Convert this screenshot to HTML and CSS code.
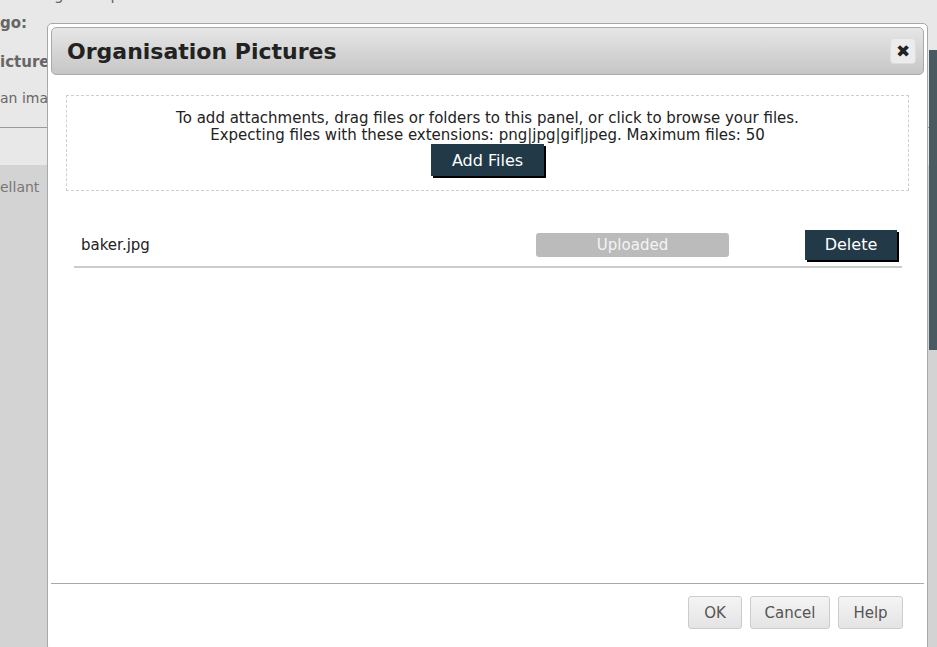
FILE: index.html
```html
<!DOCTYPE html>
<html lang="en">
<head>
    <meta charset="UTF-8">
    <meta name="viewport" content="width=device-width, initial-scale=1.0">
    <title>Organisation Pictures</title>
    <link rel="stylesheet" href="styles.css">
</head>
<body>
    <!-- Page behind the dialog -->
    <div id="page">
        <div class="page-top">
            <div class="cut-line">Organisation logo and pictures</div>
            <div class="field-label">go:</div>
            <div class="field-label">icture</div>
            <div class="field-hint">an ima</div>
        </div>
        <div class="page-gap"></div>
        <div class="page-lower">
            <div class="lower-text">ellant</div>
        </div>
        <div id="side-strip"></div>
    </div>

    <!-- Upload dialog -->
    <div id="dialog">
        <div class="dialog-title">
            <h1>Organisation Pictures</h1>
            <button class="close-button" title="Close">&#10006;</button>
        </div>

        <div class="dialog-body">
            <div class="drop-zone">
                <p>To add attachments, drag files or folders to this panel, or click to browse your files.<br>
                Expecting files with these extensions: png|jpg|gif|jpeg. Maximum files: 50</p>
                <button class="dark-button add-button">Add Files</button>
            </div>

            <div class="file-list">
                <div class="file-row">
                    <span class="file-name">baker.jpg</span>
                    <span class="file-status">Uploaded</span>
                    <button class="dark-button delete-button">Delete</button>
                </div>
            </div>
        </div>

        <div class="dialog-footer">
            <button class="plain-button ok-button">OK</button>
            <button class="plain-button cancel-button">Cancel</button>
            <button class="plain-button help-button">Help</button>
        </div>
    </div>
</body>
</html>
```

FILE: styles.css
```css
/* styles.css */
body {
    margin: 0;
    padding: 0;
    font-family: "DejaVu Sans", Verdana, sans-serif;
    height: 647px;
    overflow: hidden;
    background-color: #d3d3d3;
}

/* Page behind */
#page {
    position: relative;
    height: 647px;
}

.page-top {
    background-color: #e8e8e8;
    height: 127px;
    border-bottom: 1px solid #9a9a9a;
    color: #666;
    overflow: hidden;
}

.cut-line {
    font-size: 15px;
    margin-top: -14px;
    margin-left: -60px;
    height: 25px;
}

.field-label {
    font-size: 15px;
    font-weight: bold;
    height: 39px;
    line-height: 18px;
    padding-top: 3px;
    box-sizing: border-box;
}

.field-hint {
    font-size: 14px;
    line-height: 18px;
}

.page-gap {
    height: 37px;
    background-color: #e8e8e8;
}

.page-lower {
    background-color: #d3d3d3;
    padding-top: 14px;
}

.lower-text {
    font-size: 14px;
    color: #777;
}

#side-strip {
    position: absolute;
    right: 0;
    top: 50px;
    width: 8px;
    height: 300px;
    background-color: #4a5a62;
}

/* Dialog */
#dialog {
    position: absolute;
    left: 47px;
    top: 23px;
    width: 881px;
    height: 628px;
    padding: 3px;
    box-sizing: border-box;
    background: #fff;
    border: 1px solid #a8a8a8;
    border-radius: 5px;
    display: flex;
    flex-direction: column;
}

.dialog-title {
    height: 48px;
    box-sizing: border-box;
    border: 1px solid #aaa;
    border-radius: 5px;
    background: linear-gradient(#e6e6e6, #c6c6c6);
    display: flex;
    align-items: center;
    justify-content: space-between;
    padding: 0 7px 0 15px;
}

.dialog-title h1 {
    margin: 0;
    font-size: 22px;
    color: #222;
}

.close-button {
    width: 26px;
    height: 26px;
    padding: 0;
    border: 1px solid #ddd;
    border-radius: 4px;
    background: #ececec;
    color: #222;
    font-size: 17px;
    line-height: 24px;
    font-family: "DejaVu Sans", sans-serif;
    cursor: pointer;
}

.dialog-body {
    flex: 1;
    padding: 20px 15px 0 15px;
}

.drop-zone {
    border: 1px dashed #cfcfcf;
    height: 96px;
    box-sizing: border-box;
    text-align: center;
    padding-top: 14px;
}

.drop-zone p {
    margin: 0;
    font-size: 15px;
    line-height: 17px;
    color: #222;
}

.dark-button {
    border: none;
    border-radius: 0;
    background-color: #223a47;
    color: #fff;
    font-family: "DejaVu Sans", sans-serif;
    font-size: 16px;
    box-shadow: 2px 2px 0 #000;
    cursor: pointer;
}

.add-button {
    width: 113px;
    height: 32px;
}

.file-list {
    padding: 0 7px 0 8px;
    margin-top: 32px;
}

.file-row {
    display: flex;
    align-items: center;
    height: 45px;
    border-bottom: 2px solid #ccc;
    box-sizing: border-box;
    padding: 0 5px 0 7px;
    font-size: 15px;
    color: #222;
}

.file-name {
    flex: 1;
}

.file-status {
    width: 193px;
    height: 24px;
    line-height: 24px;
    border-radius: 3px;
    background-color: #bbb;
    color: #f4f4f4;
    text-align: center;
    font-size: 15px;
}

.delete-button {
    width: 92px;
    height: 30px;
    margin-left: 76px;
}

.dialog-footer {
    border-top: 1px solid #aaa;
    height: 64px;
    display: flex;
    justify-content: flex-end;
    align-items: flex-start;
    gap: 8px;
    padding: 12px 21px 0 0;
    box-sizing: border-box;
}

.plain-button {
    height: 33px;
    padding: 0;
    border: 1px solid #ccc;
    border-radius: 3px;
    background: linear-gradient(#f4f4f4, #e4e4e4);
    color: #555;
    font-family: "DejaVu Sans", sans-serif;
    font-size: 15px;
    cursor: pointer;
}

.ok-button {
    width: 54px;
}

.cancel-button {
    width: 80px;
}

.help-button {
    width: 65px;
}
```
